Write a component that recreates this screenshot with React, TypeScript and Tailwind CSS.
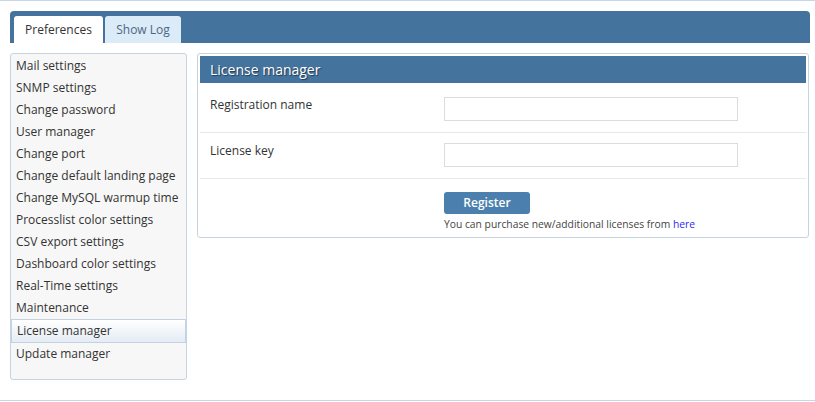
const menu = [
  "Mail settings",
  "SNMP settings",
  "Change password",
  "User manager",
  "Change port",
  "Change default landing page",
  "Change MySQL warmup time",
  "Processlist color settings",
  "CSV export settings",
  "Dashboard color settings",
  "Real-Time settings",
  "Maintenance",
  "License manager",
  "Update manager",
];

export default function App() {
  return (
    <div className="w-[815px] h-[401px] bg-white border-t border-b border-[#c6d6e6] pt-[10px] pl-[10px] pr-[5px] font-['Open_Sans',sans-serif] text-[#333]">
      {/* tab bar */}
      <div className="h-[32px] bg-[#44739e] rounded-t-[4px] pl-[4px] pt-[5px] flex gap-[2px] w-[800px]">
        <div className="w-[89px] h-[27px] bg-white rounded-t-[3px] flex items-center justify-center text-[12px] text-[#333]">
          Preferences
        </div>
        <div className="w-[76px] h-[27px] bg-[#dcebf8] rounded-t-[3px] flex items-center justify-center text-[12px] text-[#4c6782]">
          Show Log
        </div>
      </div>

      <div className="flex gap-[10px] mt-[10px] items-start">
        {/* sidebar */}
        <ul className="w-[177px] h-[327px] shrink-0 bg-[#f7f7f7] border border-[#c5d4e2] rounded-[3px] text-[12px] pt-[1px]">
          {menu.map((item) =>
            item === "License manager" ? (
              <li
                key={item}
                className="h-[24px] pl-[5px] flex items-center border border-[#c3d2e1] bg-gradient-to-b from-white to-[#e5ecf4]"
              >
                {item}
              </li>
            ) : (
              <li key={item} className="h-[22px] pl-[5px] flex items-center">
                {item}
              </li>
            )
          )}
        </ul>

        {/* license panel */}
        <div className="w-[612px] shrink-0 border border-[#c5d4e2] rounded-[3px] p-[2px] pb-0 bg-white">
          <div className="h-[27px] bg-[#44739e] text-white text-[14px] pl-[10px] flex items-center [text-shadow:1px_1px_1px_rgba(0,0,0,0.5)]">
            License manager
          </div>

          <div className="flex border-b border-[#e3e9ef] pt-[14px] pb-[11px]">
            <div className="w-[244px] pl-[10px] text-[12px] leading-[16px]">Registration name</div>
            <input className="w-[294px] h-[24px] border border-[#dcdcdc] outline-none" />
          </div>

          <div className="flex border-b border-[#e3e9ef] pt-[10px] pb-[11px]">
            <div className="w-[244px] pl-[10px] text-[12px] leading-[16px]">License key</div>
            <input className="w-[294px] h-[24px] border border-[#dcdcdc] outline-none" />
          </div>

          <div className="pl-[244px] pt-[10px] pb-[6px]">
            <button className="w-[86px] h-[22px] bg-[#4b7fae] rounded-[3px] text-white text-[12px] font-semibold">
              Register
            </button>
            <p className="text-[10.3px] leading-[14px] mt-[3px] text-[#444]">
              You can purchase new/additional licenses from{" "}
              <a className="text-[#2b2bf0]">here</a>
            </p>
          </div>
        </div>
      </div>
    </div>
  );
}
